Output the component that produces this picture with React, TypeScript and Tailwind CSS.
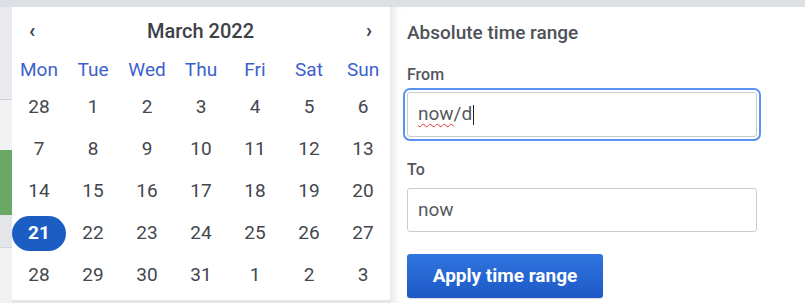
import React from "react";

const days = ["Mon", "Tue", "Wed", "Thu", "Fri", "Sat", "Sun"];
const weeks = [
  [28, 1, 2, 3, 4, 5, 6],
  [7, 8, 9, 10, 11, 12, 13],
  [14, 15, 16, 17, 18, 19, 20],
  [21, 22, 23, 24, 25, 26, 27],
  [28, 29, 30, 31, 1, 2, 3],
];

export default function App() {
  return (
    <div
      className="w-[805px] h-[303px] overflow-hidden bg-[#e4e6e9] flex flex-col"
      style={{ fontFamily: "Roboto, 'Noto Sans', sans-serif" }}
    >
      <div className="h-[7px] bg-[#dcdfe3] shrink-0" />
      <div className="flex flex-1 min-h-0">
        {/* left background strip */}
        <div className="w-[12px] shrink-0 flex flex-col">
          <div className="h-[93px] bg-[#e8eaed] border-b border-[#cfd3d8]" />
          <div className="h-[50px] bg-[#f1f2f4]" />
          <div className="h-[65px] bg-[#6aa867]" />
          <div className="h-[33px] bg-[#e3e5e8] border-b border-[#d3d6da]" />
          <div className="flex-1 bg-[#f0f1f3]" />
        </div>

        {/* calendar */}
        <div className="w-[378px] h-[293px] shrink-0 bg-white flex flex-col">
          <div className="h-[48px] flex items-center justify-between px-[14px] text-[#3d4148]">
            <span className="text-[20px] font-bold leading-none w-[10px] text-center pb-[2px] ml-[1px]">‹</span>
            <span className="text-[20px] font-medium">March 2022</span>
            <span className="text-[20px] font-bold leading-none w-[10px] text-center pb-[2px] mr-[2px]">›</span>
          </div>
          <div className="grid grid-cols-7 h-[31px] items-center">
            {days.map((d) => (
              <div key={d} className="text-center text-[19px] text-[#3e5fcb]">
                {d}
              </div>
            ))}
          </div>
          {weeks.map((w, wi) => (
            <div key={wi} className="grid grid-cols-7 h-[42px] items-center">
              {w.map((n, i) =>
                wi === 3 && i === 0 ? (
                  <div key={i} className="flex justify-center">
                    <div className="w-[54px] h-[35px] rounded-full bg-[#1c5dc4] text-white font-bold text-[19px] flex items-center justify-center">
                      {n}
                    </div>
                  </div>
                ) : (
                  <div key={i} className="text-center text-[19px] text-[#43474e]">
                    {n}
                  </div>
                )
              )}
            </div>
          ))}
        </div>

        {/* right panel */}
        <div className="flex-1 bg-white shadow-[inset_10px_0_8px_-6px_rgba(0,0,0,0.10)] pl-[17px] pt-[14px] flex flex-col items-start">
          <div className="text-[19px] leading-[24px] font-medium text-[#4d5259]">Absolute time range</div>
          <div className="mt-[20px] text-[16px] leading-[20px] font-medium text-[#52565d]">From</div>
          <div className="mt-[7px] w-[350px] h-[45px] rounded-[3px] border border-[#c6ccd4] bg-white shadow-[0_0_0_2px_#fff,0_0_0_4px_#5a93ef] flex items-center pl-[10px] text-[19px] text-[#56595e]">
            <span className="underline decoration-wavy decoration-[#e03131] decoration-1 underline-offset-[3px]">now</span>
            <span>/d</span>
            <span className="inline-block w-px h-[20px] bg-[#222] ml-[1px]" />
          </div>
          <div className="mt-[23px] text-[16px] leading-[20px] font-medium text-[#52565d]">To</div>
          <div className="mt-[8px] w-[350px] h-[44px] rounded-[3px] border border-[#c6ccd4] bg-white flex items-center pl-[10px] text-[19px] text-[#56595e]">
            now
          </div>
          <button className="mt-[22px] w-[196px] h-[44px] rounded-[3px] bg-gradient-to-b from-[#3075df] to-[#1d59c6] text-white text-[19px] font-bold flex items-center justify-center shadow-[0_1px_1px_rgba(0,0,0,0.15)]">
            Apply time range
          </button>
        </div>
      </div>
    </div>
  );
}
